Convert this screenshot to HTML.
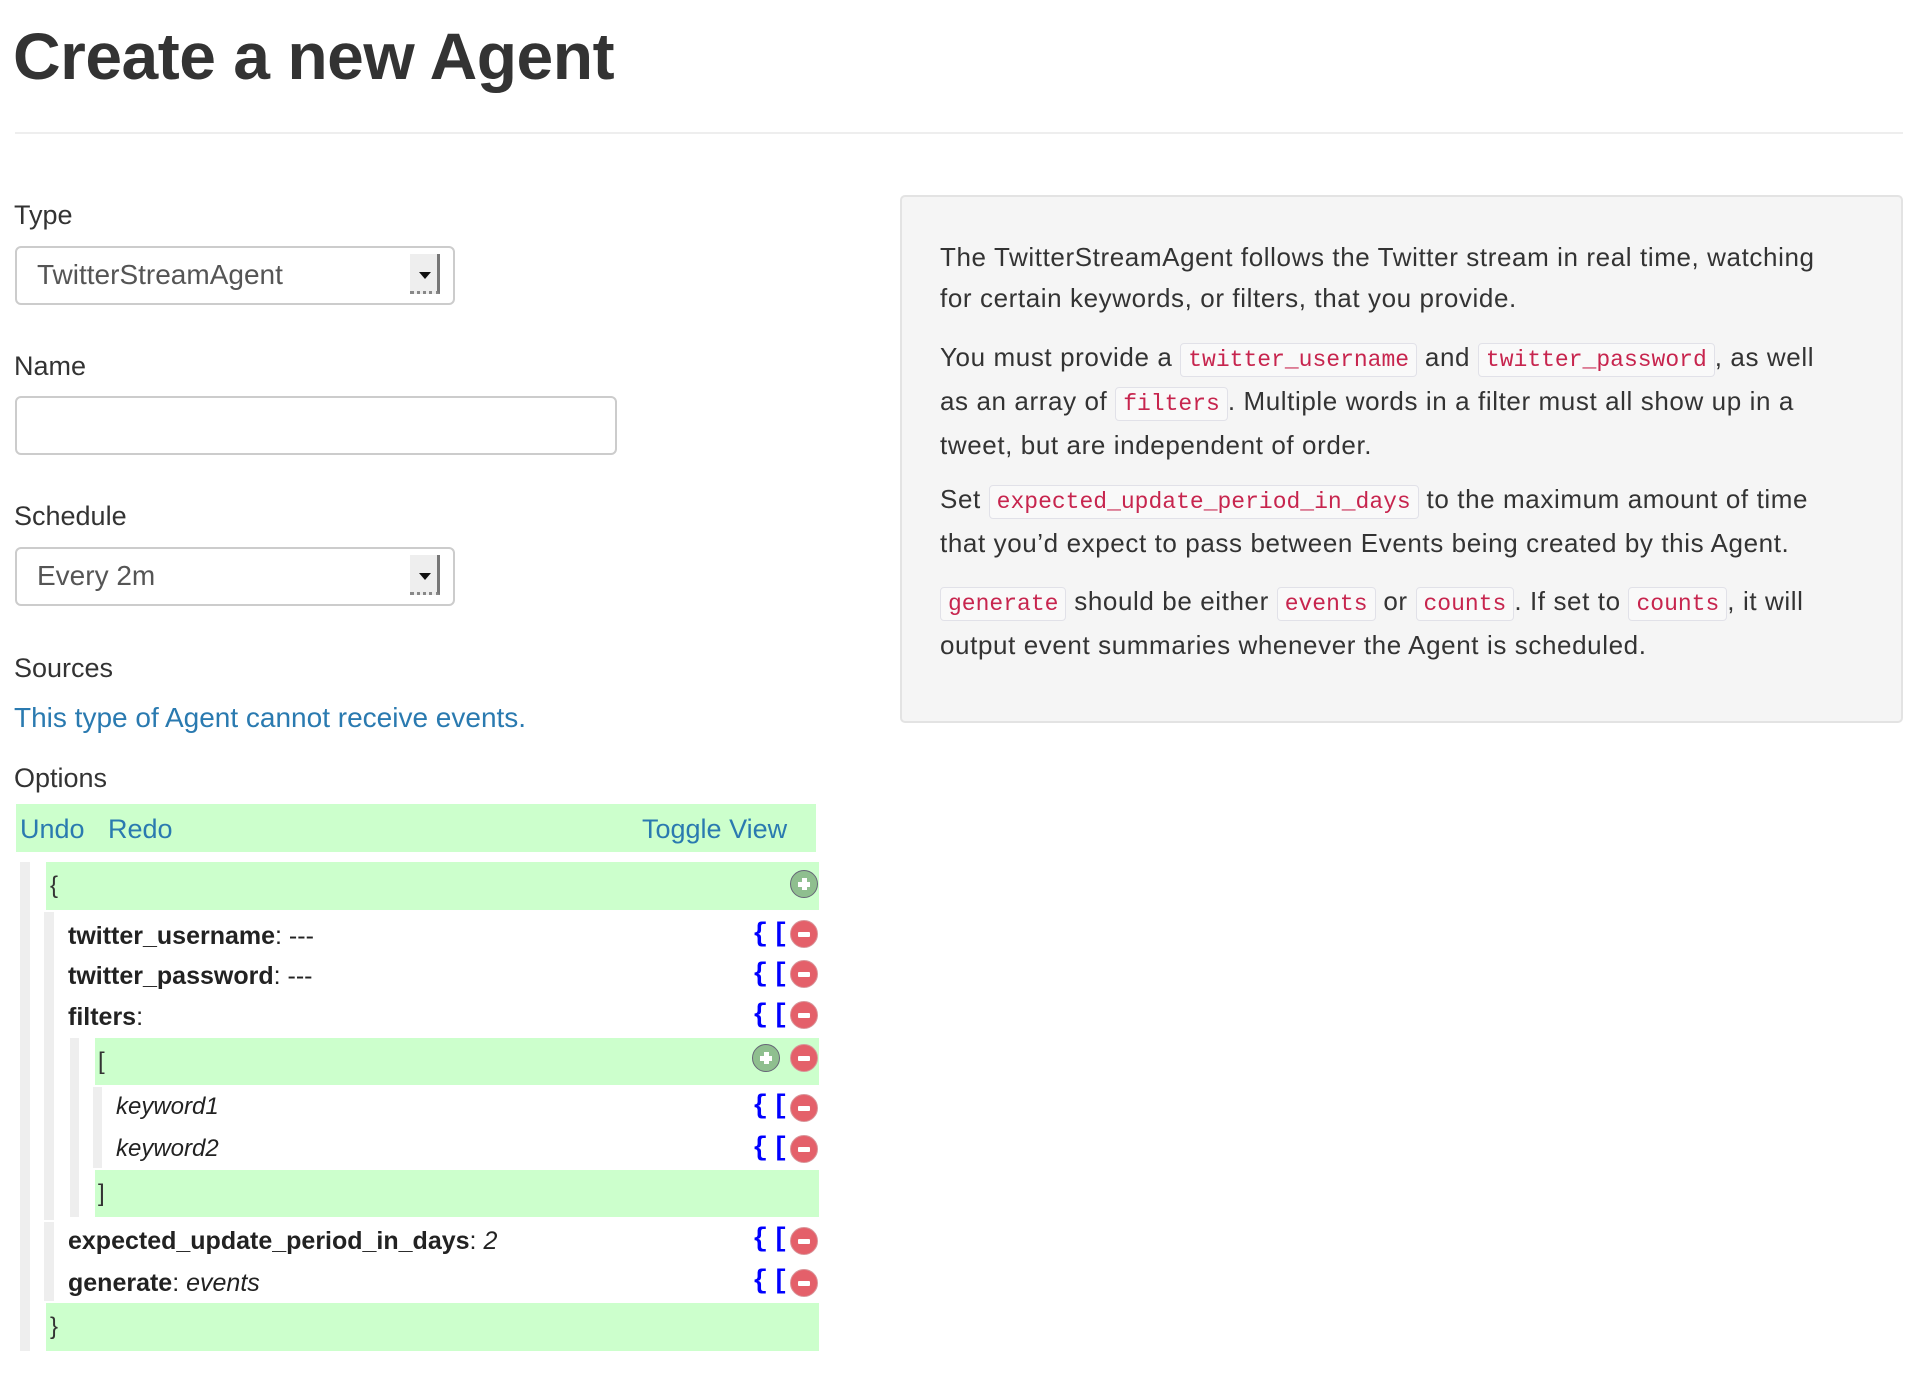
<!DOCTYPE html>
<html><head><meta charset="utf-8"><style>
*{margin:0;padding:0;box-sizing:border-box}
body{width:1918px;height:1395px;background:#fff;font-family:"Liberation Sans",Arial,sans-serif;color:#333;position:relative;overflow:hidden}
.a{position:absolute;white-space:nowrap}
h1{position:absolute;left:13px;top:18px;font-size:66px;font-weight:bold;color:#333;letter-spacing:-0.5px}
.hr{position:absolute;left:15px;top:132px;width:1888px;height:2px;background:#eee}
.lbl{font-size:27px;color:#333}
.sel,.inp{position:absolute;border:2px solid #ccc;border-radius:6px;background:#fff}
.sel span{position:absolute;left:20px;top:11px;font-size:28px;color:#555}
.arr{position:absolute;width:30px;height:40px;background:#eee;border-right:3px solid #777;border-bottom:3px dotted #888}
.arr:after{content:"";position:absolute;left:9px;top:18px;border-left:6px solid transparent;border-right:6px solid transparent;border-top:7px solid #111}
.link{color:#2a7ab0}
.g{position:absolute;background:#ccffcc}
.s{position:absolute;background:#eee}
.k{font-size:25px;font-weight:bold;color:#222}
.i{font-size:24px;font-style:italic;color:#222}
.br{position:absolute;font-size:27px;font-weight:bold;color:#0000ff;font-family:"Liberation Mono",monospace;letter-spacing:4px}
.m,.p{position:absolute;width:28px;height:28px;border-radius:50%}
.m{background:#e4606a;border:1px solid #d9959a}
.m:after{content:"";position:absolute;left:7px;top:11px;width:12px;height:5px;background:#fff;border-radius:1px}
.p{background:#8fbf8f;border:1px solid #667}
.p:before{content:"";position:absolute;left:7px;top:11px;width:12px;height:5px;background:#fff}
.p:after{content:"";position:absolute;left:11px;top:7px;width:5px;height:12px;background:#fff}
.panel{position:absolute;left:900px;top:195px;width:1003px;height:528px;background:#f5f5f5;border:2px solid #e3e3e3;border-radius:5px}
.panel p{position:absolute;left:38px;font-size:26px;letter-spacing:0.6px;line-height:41px;color:#333;white-space:nowrap}
code{font-family:"Liberation Mono",monospace;font-size:23px;letter-spacing:0;color:#c7254e;background:#f9f9f9;border:1px solid #e1e1e8;border-radius:4px;padding:3px 7px}
</style></head><body>
<h1>Create a new Agent</h1>
<div class="hr"></div>

<div class="a lbl" style="left:14px;top:200px">Type</div>
<div class="sel" style="left:15px;top:246px;width:440px;height:59px"><span>TwitterStreamAgent</span><div class="arr" style="left:393px;top:6px"></div></div>

<div class="a lbl" style="left:14px;top:351px">Name</div>
<div class="inp" style="left:15px;top:396px;width:602px;height:59px"></div>

<div class="a lbl" style="left:14px;top:501px">Schedule</div>
<div class="sel" style="left:15px;top:547px;width:440px;height:59px"><span>Every 2m</span><div class="arr" style="left:393px;top:6px"></div></div>

<div class="a lbl" style="left:14px;top:653px">Sources</div>
<div class="a link" style="left:14px;top:702px;font-size:28px">This type of Agent cannot receive events.</div>

<div class="a lbl" style="left:14px;top:763px">Options</div>
<div class="g" style="left:16px;top:804px;width:800px;height:48px"></div>
<div class="a link" style="left:20px;top:814px;font-size:27px">Undo</div>
<div class="a link" style="left:108px;top:814px;font-size:27px">Redo</div>
<div class="a link" style="left:642px;top:814px;font-size:27px">Toggle View</div>

<div class="s" style="left:20px;top:862px;width:10px;height:489px"></div>
<div class="g" style="left:46px;top:862px;width:773px;height:48px"></div>
<div class="a" style="left:50px;top:872px;font-size:24px">{</div>
<div class="p" style="left:790px;top:870px"></div>

<div class="s" style="left:44px;top:912px;width:10px;height:308px"></div>
<div class="s" style="left:44px;top:1222px;width:10px;height:79px"></div>

<div class="a k" style="left:68px;top:922px">twitter_username<span style="font-weight:normal">: ---</span></div>
<div class="br" style="left:752px;top:920px">{[</div><div class="m" style="left:790px;top:920px"></div>
<div class="a k" style="left:68px;top:962px">twitter_password<span style="font-weight:normal">: ---</span></div>
<div class="br" style="left:752px;top:960px">{[</div><div class="m" style="left:790px;top:960px"></div>
<div class="a k" style="left:68px;top:1003px">filters<span style="font-weight:normal">:</span></div>
<div class="br" style="left:752px;top:1001px">{[</div><div class="m" style="left:790px;top:1001px"></div>

<div class="s" style="left:70px;top:1038px;width:9px;height:179px"></div>
<div class="g" style="left:95px;top:1038px;width:724px;height:47px"></div>
<div class="a" style="left:98px;top:1048px;font-size:24px">[</div>
<div class="p" style="left:752px;top:1044px"></div><div class="m" style="left:790px;top:1044px"></div>
<div class="s" style="left:93px;top:1087px;width:9px;height:81px"></div>
<div class="a i" style="left:116px;top:1093px">keyword1</div>
<div class="br" style="left:752px;top:1092px">{[</div><div class="m" style="left:790px;top:1094px"></div>
<div class="a i" style="left:116px;top:1135px">keyword2</div>
<div class="br" style="left:752px;top:1134px">{[</div><div class="m" style="left:790px;top:1135px"></div>
<div class="g" style="left:95px;top:1170px;width:724px;height:47px"></div>
<div class="a" style="left:98px;top:1180px;font-size:24px">]</div>

<div class="a k" style="left:68px;top:1227px">expected_update_period_in_days<span style="font-weight:normal">: <i>2</i></span></div>
<div class="br" style="left:752px;top:1225px">{[</div><div class="m" style="left:790px;top:1227px"></div>
<div class="a k" style="left:68px;top:1269px">generate<span style="font-weight:normal">: <i>events</i></span></div>
<div class="br" style="left:752px;top:1267px">{[</div><div class="m" style="left:790px;top:1269px"></div>
<div class="g" style="left:46px;top:1303px;width:773px;height:48px"></div>
<div class="a" style="left:50px;top:1313px;font-size:24px">}</div>

<div class="panel">
<p style="top:40px">The TwitterStreamAgent follows the Twitter stream in real time, watching<br>for certain keywords, or filters, that you provide.</p>
<p style="top:140px">You must provide a <code>twitter_username</code> and <code>twitter_password</code>, as well<br>as an array of <code>filters</code>. Multiple words in a filter must all show up in a<br>tweet, but are independent of order.</p>
<p style="top:282px">Set <code>expected_update_period_in_days</code> to the maximum amount of time<br>that you’d expect to pass between Events being created by this Agent.</p>
<p style="top:384px"><code>generate</code> should be either <code>events</code> or <code>counts</code>. If set to <code>counts</code>, it will<br>output event summaries whenever the Agent is scheduled.</p>
</div>
</body></html>
